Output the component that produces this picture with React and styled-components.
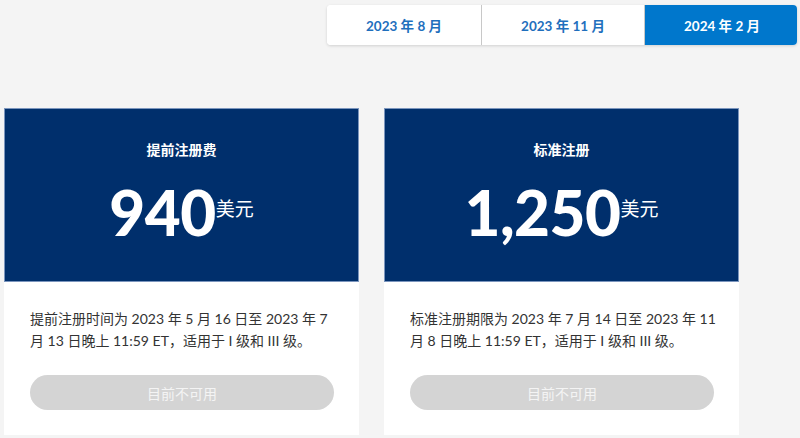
import React from "react";
import styled, { createGlobalStyle } from "styled-components";

const GlobalStyle = createGlobalStyle`
  html, body {
    margin: 0;
    padding: 0;
    background: #f4f4f4;
    font-family: Lato, "Noto Sans CJK SC", sans-serif;
  }
`;

const tabs = ["2023 年 8 月", "2023 年 11 月", "2024 年 2 月"];

const plans = [
  {
    title: "提前注册费",
    price: "940",
    text: "提前注册时间为 2023 年 5 月 16 日至 2023 年 7 月 13 日晚上 11:59 ET，适用于 I 级和 III 级。",
  },
  {
    title: "标准注册",
    price: "1,250",
    text: "标准注册期限为 2023 年 7 月 14 日至 2023 年 11 月 8 日晚上 11:59 ET，适用于 I 级和 III 级。",
  },
];

function App() {
  return (
    <Page>
      <GlobalStyle />
      <TabBar>
        {tabs.map((t, i) => (
          <Tab key={t} active={i === 2} wide={i === 1}>
            {t}
          </Tab>
        ))}
      </TabBar>
      <Cards>
        {plans.map((p) => (
          <Card key={p.title}>
            <Header>
              <Title>{p.title}</Title>
              <PriceRow>
                <Amount>{p.price}</Amount>
                <Currency>美元</Currency>
              </PriceRow>
            </Header>
            <Body>
              <Text>{p.text}</Text>
              <Button disabled>目前不可用</Button>
            </Body>
          </Card>
        ))}
      </Cards>
    </Page>
  );
}

const Page = styled.div`
  width: 800px;
  height: 438px;
  overflow: hidden;
`;

const TabBar = styled.div`
  display: flex;
  margin: 5px 3px 0 auto;
  width: 470px;
  height: 40px;
  border-radius: 4px;
  background: #fff;
  box-shadow: 0 1px 3px rgba(0, 0, 0, 0.15);
  overflow: hidden;
`;

const Tab = styled.div`
  flex: ${(p) => (p.wide ? "0 0 162px" : "0 0 154px")};
  display: flex;
  align-items: center;
  justify-content: center;
  font-size: 13.5px;
  font-weight: 700;
  color: ${(p) => (p.active ? "#fff" : "#1f6fbd")};
  background: ${(p) => (p.active ? "#0077cc" : "#fff")};
  & + & {
    border-left: 1px solid #c8c8c8;
  }
`;

const Cards = styled.div`
  display: flex;
  gap: 25px;
  margin: 63px 0 0 4px;
`;

const Card = styled.div`
  width: 355px;
  display: flex;
  flex-direction: column;
`;

const Header = styled.div`
  height: 174px;
  box-sizing: border-box;
  background: #002f6c;
  border: 1px solid #7b95bd;
  display: flex;
  flex-direction: column;
  align-items: center;
  color: #fff;
`;

const Title = styled.div`
  margin-top: 30px;
  font-size: 14px;
  font-weight: 700;
  line-height: 22px;
`;

const PriceRow = styled.div`
  display: flex;
  align-items: center;
  margin-top: 16px;
`;

const Amount = styled.span`
  font-size: 62px;
  font-weight: 900;
  line-height: 70px;
  letter-spacing: -0.5px;
`;

const Currency = styled.span`
  font-size: 19px;
  margin-bottom: 10px;
`;

const Body = styled.div`
  background: #fff;
  padding: 26px 18px 25px 26px;
`;

const Text = styled.p`
  margin: 0;
  font-size: 14px;
  line-height: 22px;
  color: #333;
`;

const Button = styled.button`
  display: block;
  width: 304px;
  height: 35px;
  margin-top: 23px;
  border: none;
  border-radius: 18px;
  background: #d4d4d4;
  color: #f4f4f4;
  font-family: inherit;
  font-size: 14px;
`;

export default App;
